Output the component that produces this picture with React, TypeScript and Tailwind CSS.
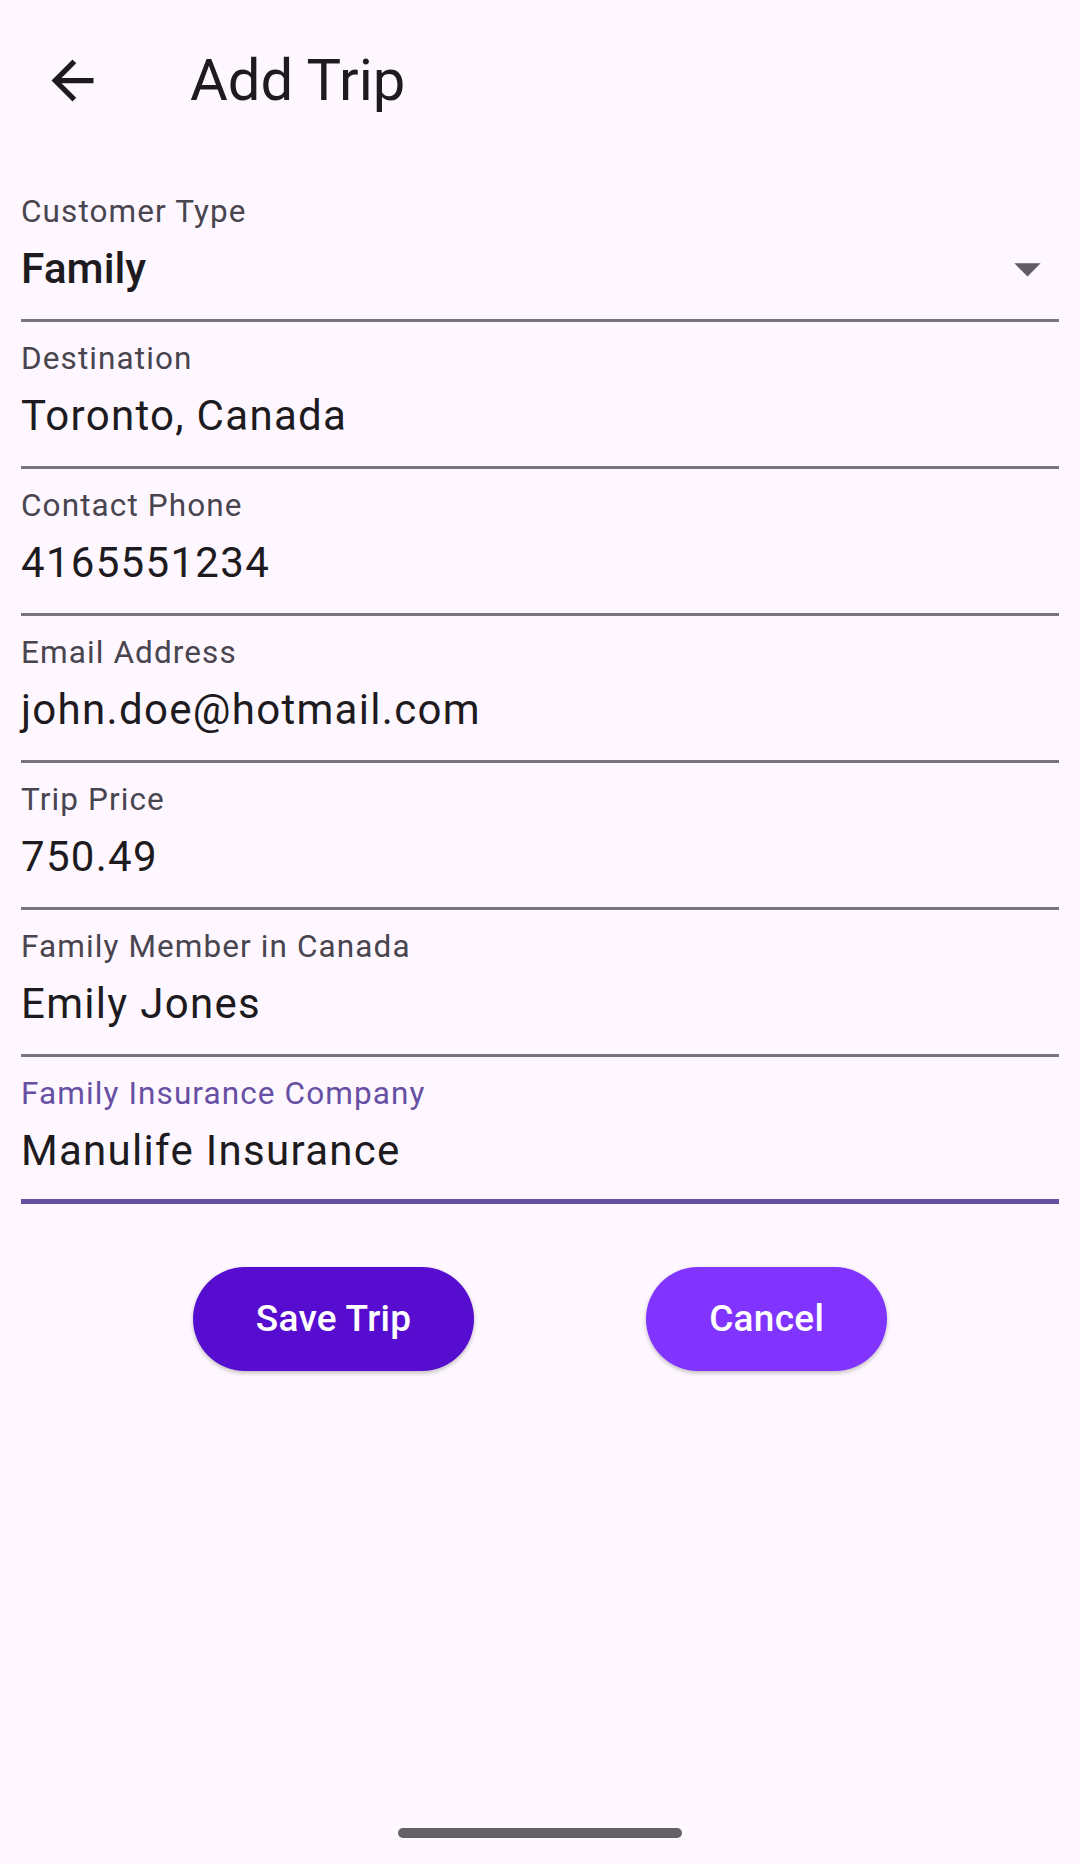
import React from "react";

type Field = {
  label: string;
  value: string;
  focused?: boolean;
};

const fields: Field[] = [
  { label: "Destination", value: "Toronto, Canada" },
  { label: "Contact Phone", value: "4165551234" },
  { label: "Email Address", value: "john.doe@hotmail.com" },
  { label: "Trip Price", value: "750.49" },
  { label: "Family Member in Canada", value: "Emily Jones" },
  { label: "Family Insurance Company", value: "Manulife Insurance", focused: true },
];

function ArrowBack() {
  return (
    <svg viewBox="0 0 24 24" className="h-[63px] w-[63px] shrink-0" fill="#1D1B20">
      <path d="M20 11H7.83l5.59-5.59L12 4l-8 8 8 8 1.41-1.41L7.83 13H20v-2z" />
    </svg>
  );
}

function ArrowDropDown() {
  return (
    <svg viewBox="0 0 24 24" className="h-[63px] w-[63px] shrink-0" fill="#5f5c63">
      <path d="M7 10l5 5 5-5z" />
    </svg>
  );
}

function TextField({ label, value, focused }: Field) {
  return (
    <div className="flex flex-col">
      <div className="pt-[19px]">
        <div
          className={`h-[36px] text-[31.5px] leading-[36px] tracking-[1.1px] ${
            focused ? "text-[#6750A4]" : "text-[#49454F]"
          }`}
        >
          {label}
        </div>
        <div className="mt-[14px] h-[50px] text-[42px] leading-[50px] tracking-[1.3px] text-[#1D1B20]">
          {value}
        </div>
      </div>
      {focused ? (
        <div className="mt-[23px] h-[5px] bg-[#6750A4]" />
      ) : (
        <div className="mt-[25px] h-[3px] bg-[#79747E]" />
      )}
    </div>
  );
}

export default function App() {
  return (
    <div className="flex min-h-[1864px] w-[1080px] flex-col bg-[#FEF7FF] font-['Roboto',sans-serif]">
      {/* App bar */}
      <div className="flex h-[160px] items-center pl-[41px]">
        <ArrowBack />
        <h1 className="ml-[86px] text-[58px] font-normal text-[#1D1B20]">Add Trip</h1>
      </div>

      {/* Form */}
      <div className="flex flex-col px-[21px] pt-[15px]">
        <div className="flex flex-col">
          <div className="pt-[19px]">
            <div className="h-[36px] text-[31.5px] leading-[36px] tracking-[1.1px] text-[#49454F]">
              Customer Type
            </div>
            <div className="mt-[7px] flex h-[63px] items-center justify-between">
              <span className="text-[42.5px] font-medium leading-[50px] text-[#1D1B20]">Family</span>
              <ArrowDropDown />
            </div>
          </div>
          <div className="mt-[19px] h-[3px] bg-[#79747E]" />
        </div>

        {fields.map((f) => (
          <TextField key={f.label} {...f} />
        ))}

        <div className="mt-[63px] flex justify-evenly">
          <button className="h-[104px] rounded-full bg-[#570dcf] px-[63px] text-[37px] font-medium tracking-[0.3px] text-white shadow-[0_2px_4px_rgba(0,0,0,0.25)]">
            Save Trip
          </button>
          <button className="h-[104px] rounded-full bg-[#8133ff] px-[63px] text-[37px] font-medium tracking-[0.3px] text-white shadow-[0_2px_4px_rgba(0,0,0,0.25)]">
            Cancel
          </button>
        </div>
      </div>

      {/* Gesture bar */}
      <div className="mt-auto flex justify-center pb-[26px]">
        <div className="h-[10px] w-[284px] rounded-full bg-[#646166]" />
      </div>
    </div>
  );
}
